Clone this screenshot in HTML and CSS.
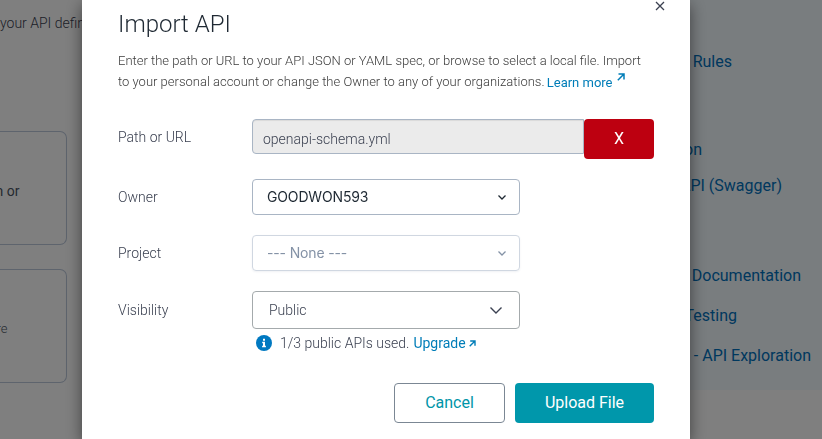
FILE: index.html
```html
<!DOCTYPE html>
<html lang="en">
<head>
<meta charset="utf-8">
<title>Import API</title>
<link rel="stylesheet" href="styles.css">
</head>
<body>
<div class="page">
  <main class="content">
    <p class="intro">your API defin</p>
    <section class="card card-first">n or</section>
    <section class="card card-second">re</section>
  </main>
  <aside class="links">
    <a class="link-rules">Rules</a>
    <a class="link-version">on</a>
    <a class="link-swagger">API (Swagger)</a>
    <a class="link-docs">Documentation</a>
    <a class="link-testing">Testing</a>
    <a class="link-explore">- API Exploration</a>
  </aside>
</div>
<div class="overlay">
  <div class="modal" role="dialog">
    <button class="close" aria-label="Close"><svg width="10" height="10" viewBox="0 0 10 10"><path d="M1 1l8 8M9 1L1 9"/></svg></button>
    <h1>Import API</h1>
    <p class="description"><span class="line-one">Enter the path or URL to your API JSON or YAML spec, or browse to select a local file. Import</span><br><span class="line-two">to your personal account or change the Owner to any of your organizations.</span> <a class="learn">Learn more<svg class="learn-arrow" width="8" height="8" viewBox="0 0 8 8"><path d="M1.500 1H7v5.500M7 1L.8 7.200"/></svg></a></p>
    <div class="row row-path">
      <label>Path or URL</label>
      <div class="file">openapi-schema.yml</div>
      <button class="remove">X</button>
    </div>
    <div class="row row-owner">
      <label>Owner</label>
      <div class="select owner"><span>GOODWON593</span><svg width="10" height="7" viewBox="0 0 10 7"><path d="M1.500 1.500L5 5l3.500-3.500"/></svg></div>
    </div>
    <div class="row row-project">
      <label>Project</label>
      <div class="select project"><span>--- None ---</span><svg width="10" height="7" viewBox="0 0 10 7"><path d="M1.500 1.500L5 5l3.500-3.500"/></svg></div>
    </div>
    <div class="row row-visibility">
      <label>Visibility</label>
      <div class="select visibility"><span>Public</span><svg width="14" height="9" viewBox="0 0 14 9"><path d="M1.500 1.500L7 7l5.500-5.500"/></svg></div>
    </div>
    <div class="usage">
      <svg class="info" width="16" height="16" viewBox="0 0 16 16"><circle cx="8" cy="8" r="8"/><path d="M7 3.700h2v2H7zM6.200 6.800H9v4h.9v1.400H6.100v-1.400H7V8.200h-.8z"/></svg>
      <span class="usage-text">1/3 public APIs used.</span>
      <a>Upgrade</a>
      <svg class="upgrade-arrow" width="7" height="7" viewBox="0 0 7 7"><path d="M1.200 1H6v4.800M6 1L.7 6.300"/></svg>
    </div>
    <div class="actions">
      <button class="cancel">Cancel</button>
      <button class="upload">Upload File</button>
    </div>
  </div>
</div>
</body>
</html>
```
FILE: styles.css
```css
* { box-sizing: border-box; }
body {
  margin: 0;
  height: 439px;
  overflow: hidden;
  background: #fff;
  font-family: Roboto, "Liberation Sans", sans-serif;
}
button { font-family: inherit; padding: 0; }
svg { fill: none; stroke: currentColor; flex: none; }

.page { display: flex; justify-content: space-between; height: 439px; }
.content { width: 110px; }
.intro {
  margin: 13px 0 0;
  height: 118px;
  font-size: 14px;
  line-height: 20px;
  font-weight: 300;
  color: #3b4151;
  white-space: nowrap;
}
.card {
  width: 67px;
  height: 114px;
  border: 1px solid #bcc8da;
  border-left: 0;
  border-radius: 0 7px 7px 0;
  color: #4b5563;
  font-size: 14px;
  line-height: 20px;
}
.card-first { padding-top: 49px; text-indent: -4.500px; }
.card-second { margin-top: 24px; padding-top: 49px; font-size: 13px; font-weight: 300; text-indent: -3.500px; }
.links {
  display: flex;
  flex-direction: column;
  align-items: flex-end;
  width: 150px;
  height: 390px;
  padding-top: 52px;
  background: #f3faff;
  color: #0071bc;
  font-size: 16px;
  line-height: 20px;
  white-space: nowrap;
}
.link-rules { margin-right: 90px; }
.link-version { margin: 68px 120px 0 0; }
.link-swagger { margin: 16px 40px 0 0; }
.link-docs { margin: 70px 21px 0 0; }
.link-testing { margin: 20px 85px 0 0; }
.link-explore { margin: 20px 11px 0 0; }

.overlay {
  position: fixed;
  inset: 0;
  padding-left: 82px;
  background: rgba(0, 0, 0, .5);
}
.modal {
  position: relative;
  width: 608px;
  height: 439px;
  padding: 8px 36px 0;
  background: #fff;
  box-shadow: 0 5px 15px rgba(0, 0, 0, .5);
  color: #3b4151;
}
.close {
  position: absolute;
  top: 1px;
  right: 25px;
  width: 10px;
  height: 10px;
  border: 0;
  background: none;
  color: #3b4151;
}
.close svg { display: block; stroke-width: 1.3; }
h1 {
  margin: 0;
  height: 42px;
  font-size: 24px;
  line-height: 32px;
  font-weight: 300;
  color: #1f2933;
}
.description {
  margin: 0;
  height: 69px;
  font-size: 13px;
  line-height: 21px;
  font-weight: 300;
  color: #3b3b3b;
  white-space: nowrap;
}
.learn {
  display: inline-block;
  margin-left: -1px;
  padding-top: 1px;
  line-height: 20px;
  vertical-align: -1px;
  font-weight: 400;
  color: #007db8;
}
.learn-arrow { margin-left: 4px; vertical-align: 6px; stroke-width: 1.5; }
.row {
  display: flex;
  align-items: flex-start;
  font-size: 14px;
}
label { width: 134px; line-height: 36px; font-weight: 300; }
.file {
  width: 332px;
  height: 35px;
  padding: 2px 10px 0;
  border: 1px solid #a9b5c4;
  border-radius: 4px 0 0 4px;
  background: #ebebeb;
  box-shadow: inset 0 1px 1px rgba(0, 0, 0, .075);
  line-height: 35px;
  font-weight: 300;
}
.remove {
  width: 70px;
  height: 40px;
  border: 0;
  border-radius: 4px;
  background: #bd0010;
  color: #fff;
  font-size: 16px;
}
.row-path { height: 60px; }
.row-owner, .row-project { height: 56px; }
.row-visibility { height: 42px; }
.row-visibility label { line-height: 38px; }
.select {
  display: flex;
  align-items: center;
  justify-content: space-between;
  width: 268px;
  height: 36px;
  padding: 0 12px 0 14px;
  border: 1px solid #a9b5c4;
  border-radius: 4px;
}
.owner, .project { font-family: Inter, Roboto, sans-serif; letter-spacing: -.15px; }
.owner span, .project span { padding-bottom: 2px; }
.owner { color: #1f2933; }
.owner svg, .project svg { stroke-width: 1.3; }
.project {
  border-color: #d0d7e1;
  box-shadow: 0 1px 2px rgba(60, 80, 110, .08);
  color: #8492a6;
}
.visibility {
  height: 38px;
  padding: 0 16px;
  border-color: #a4aaac;
  font-weight: 300;
}
.visibility svg { stroke-width: 1.4; }
.usage {
  display: flex;
  align-items: center;
  height: 20px;
  margin-left: 138px;
  font-size: 14px;
  font-weight: 300;
}
.info { margin-right: 8px; fill: #0079c1; stroke: none; }
.info path { fill: #fff; }
.usage-text { margin-right: 4px; }
.usage a { font-weight: 400; color: #007db8; }
.upgrade-arrow { margin-left: 3px; color: #007db8; stroke-width: 1.4; }
.actions {
  display: flex;
  justify-content: flex-end;
  gap: 10px;
  margin-top: 30px;
}
.actions button, .remove { padding-bottom: 2px; }
.actions button { height: 40px; border-radius: 4px; font-size: 16px; }
.cancel { width: 111px; border: 1px solid #7b8794; background: #fff; color: #0095a8; }
.upload { width: 139px; border: 0; background: #0097ab; color: #fff; }
```
